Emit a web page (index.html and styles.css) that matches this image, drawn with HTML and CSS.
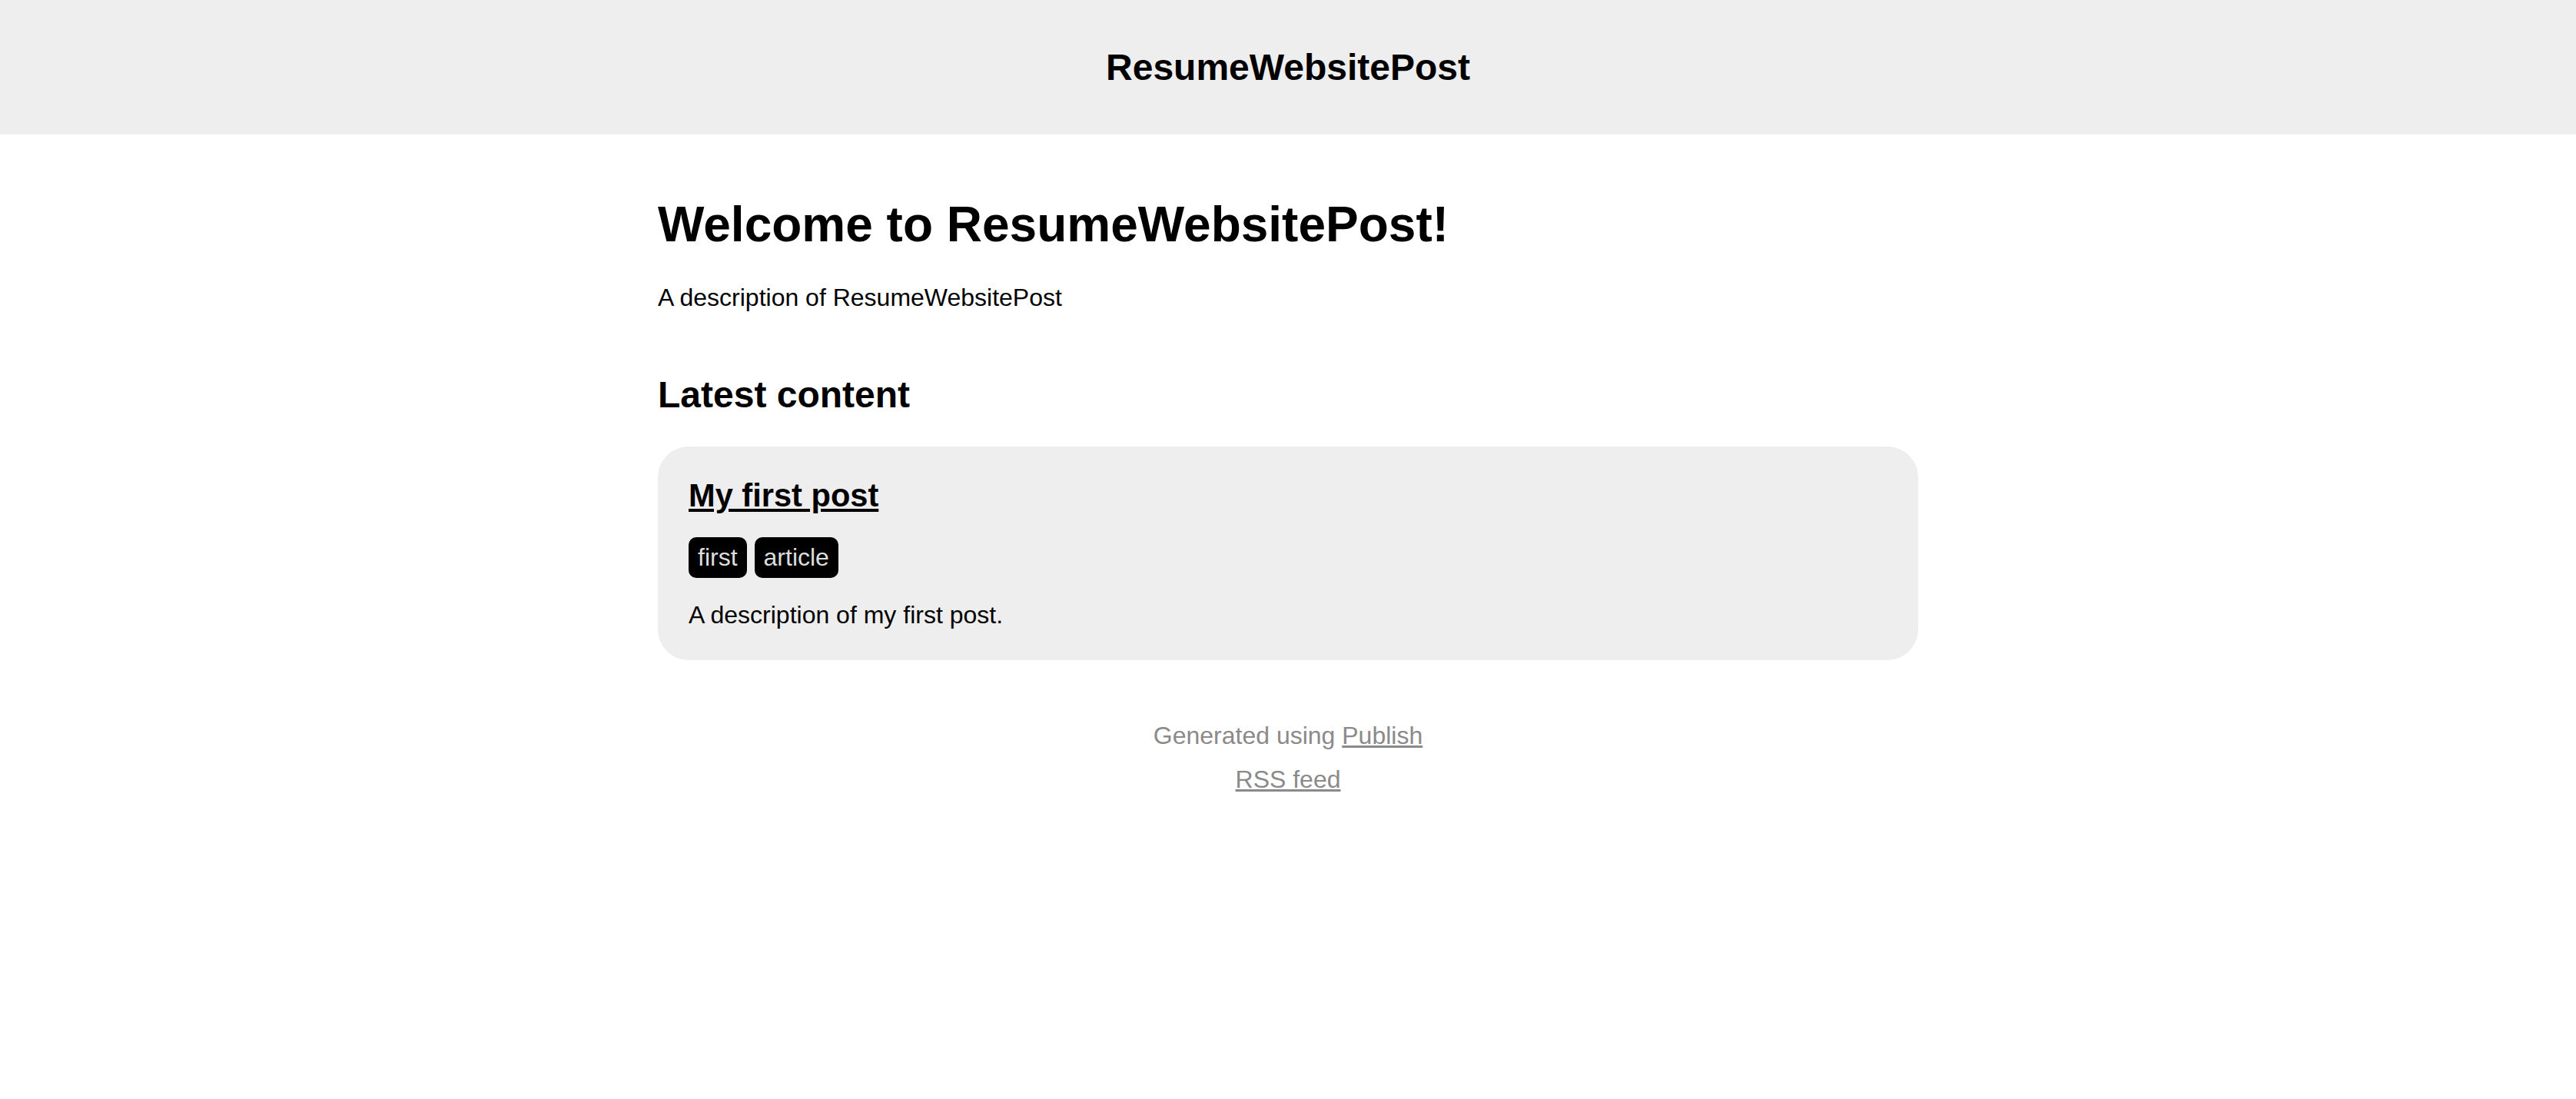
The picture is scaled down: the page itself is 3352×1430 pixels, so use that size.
FILE: index.html
```html
<!DOCTYPE html>
<html lang="en">
<head>
<meta charset="utf-8">
<title>ResumeWebsitePost</title>
<link rel="stylesheet" href="styles.css">
</head>
<body>
<header>
  <div class="wrapper header-wrapper">
    <a class="site-name" href="#">ResumeWebsitePost</a>
  </div>
</header>
<div class="wrapper">
  <h1 class="page-title">Welcome to ResumeWebsitePost!</h1>
  <p class="description">A description of ResumeWebsitePost</p>
  <h2 class="section-title">Latest content</h2>
  <ul class="item-list">
    <li class="item">
      <article>
        <h1 class="item-title"><a href="#">My first post</a></h1>
        <ul class="tag-list"><li class="tag"><a href="#">first</a></li><li class="tag"><a href="#">article</a></li></ul>
        <p class="item-desc">A description of my first post.</p>
      </article>
    </li>
  </ul>
</div>
<footer class="footer">
  <p class="footer-line">Generated using <a href="#">Publish</a></p>
  <p class="footer-line"><a href="#">RSS feed</a></p>
</footer>
</body>
</html>
```
FILE: styles.css
```css
* {
  margin: 0;
  padding: 0;
  box-sizing: border-box;
}

body {
  background: #fff;
  color: #000;
  font-family: "Liberation Sans", Arial, Helvetica, sans-serif;
  font-size: 32px;
  text-align: center;
}

a {
  color: inherit;
}

.wrapper {
  max-width: 1800px;
  margin-left: auto;
  margin-right: auto;
  padding: 80px;
  text-align: left;
}

header {
  background-color: #eee;
}

.header-wrapper {
  padding-top: 60px;
  padding-bottom: 60px;
  text-align: center;
}

.site-name {
  font-size: 48px;
  font-weight: bold;
  color: #000;
  text-decoration: none;
}

.page-title {
  font-size: 64px;
  margin-bottom: 40px;
}

.description {
  margin-bottom: 80px;
}

.section-title {
  font-size: 48px;
  margin: 40px 0;
}

.item-list {
  list-style: none;
}

.item {
  display: block;
  padding: 40px;
  border-radius: 40px;
  background-color: #eee;
}

.item-title {
  font-size: 41.6px;
  margin-bottom: 30px;
}

.tag-list {
  list-style: none;
  margin-bottom: 30px;
}

.tag {
  display: inline-block;
  background-color: #000;
  padding: 8px 12px;
  border-radius: 10px;
  margin-right: 10px;
}

.tag a {
  color: #ddd;
  text-decoration: none;
}

.item-desc {
  margin-bottom: 0;
}

.footer {
  color: #8a8a8a;
}

.footer-line {
  margin-bottom: 20px;
}
```
